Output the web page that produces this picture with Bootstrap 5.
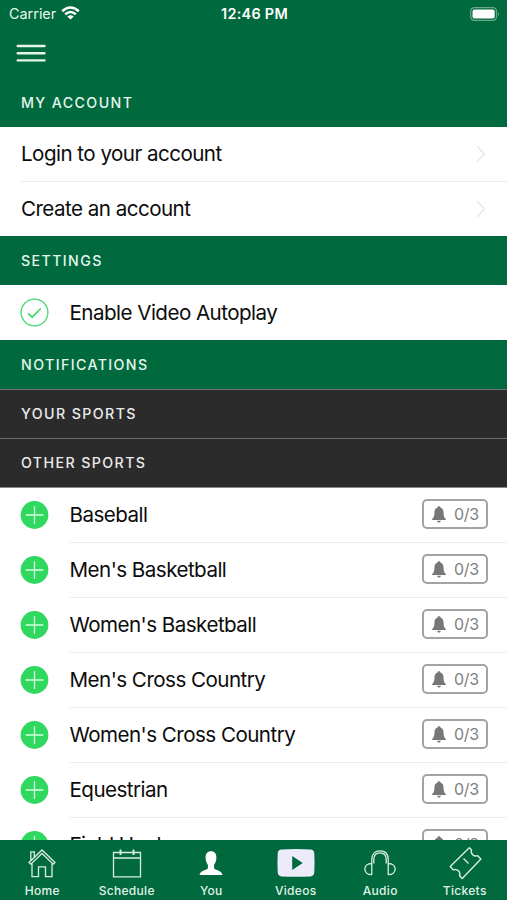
<!DOCTYPE html>
<html lang="en">
<head>
<meta charset="utf-8">
<meta name="viewport" content="width=device-width, initial-scale=1">
<title>My Account</title>
<link href="https://cdn.jsdelivr.net/npm/bootstrap@5.3.0/dist/css/bootstrap.min.css" rel="stylesheet">
<style>
  :root { --brand: #00693e; --ink: #0c0c0c; }
  body { font-family: Inter, "Liberation Sans", sans-serif; color: var(--ink); background: #fff; }
  svg { display: block; flex: none; }
  .bg-brand { background: var(--brand); color: #e6f6ec; }
  .status-bar { height: 28px; padding: 0 7px 0 9px; font-size: 14.4px; line-height: 28px; }
  .status-bar > * { flex: 1 1 0; }
  .status-time { font-weight: 600; letter-spacing: .3px; color: #fff; }
  .wifi { margin: -2px 0 0 5px; }
  .battery { margin-top: -1px; }
  .menu-bar { height: 50px; padding-left: 16px; }
  .section-title { height: 49px; padding: 2px 0 0 21px; font-size: 14.2px; font-weight: 450; line-height: 1; letter-spacing: 1.4px; margin: 0; }
  .section-dark { background: #2b2b2b; color: #ebebeb; border-top: 1px solid #6f6f6f; }
  .section-last { height: 50px; border-bottom: 1px solid #8a8a8a; }
  .line-row { height: 55px; padding-right: 19px; font-size: 20.6px; letter-spacing: -.54px; line-height: 1; border-bottom: 1px solid #ececee; }
  .row-label { padding-top: 2px; }
  .account-row { height: 54.5px; margin-left: 21px; padding-right: 21px; }
  .account-row-last { height: 54px; border-bottom: 0; }
  .icon-cell { width: 69.5px; padding-left: 20px; }
  .alert-count { width: 66px; height: 30px; margin-top: -1px; padding-left: 1px; border: 2px solid #a3a3a3; border-radius: 5px; background: #fff; color: #808080; font-size: 16px; letter-spacing: -.3px; }
  .tab-bar { height: 60px; }
  .tab-item { color: #e0f3e8; font-size: 12px; font-weight: 550; line-height: 14px; letter-spacing: .3px; padding-top: 6px; }
  .tab-item span { margin-top: 2px; }
</style>
<script src="https://cdn.jsdelivr.net/npm/bootstrap@5.3.0/dist/js/bootstrap.bundle.min.js"></script>
</head>
<body class="vh-100 overflow-hidden d-flex flex-column">
<svg width="0" height="0" class="d-none">
  <symbol id="plus" viewBox="0 0 28 28"><circle cx="14" cy="14" r="13.9" fill="#30d860"/><path d="M14 5.6v16.8M5.6 14h16.8" stroke="#d5ffdf" stroke-width="1.3" stroke-linecap="round"/></symbol>
  <symbol id="bell" viewBox="0 0 14 17"><path d="M7 .3c.8 0 1.4.5 1.4 1.2 2.2.7 3 2.4 3.1 4.6.2 4.2.6 5.7 2.4 7v.9H.1v-.9c1.8-1.3 2.2-2.8 2.4-7 .1-2.2.9-3.9 3.1-4.6C5.6.8 6.2.3 7 .3zM5.1 14.7h3.8c-.2 1.2-.9 1.8-1.9 1.8s-1.700-.6-1.900-1.800z" fill="#777"/></symbol>
  <symbol id="chevron" viewBox="0 0 10 18"><path d="M1 1l7.5 8L1 17" fill="none" stroke="#e8e6f5" stroke-width="1.5"/></symbol>
</svg>

<header class="bg-brand flex-shrink-0">
  <div class="status-bar d-flex align-items-center">
    <div class="d-flex align-items-center">
      <span>Carrier</span>
      <svg class="wifi" width="19" height="14" viewBox="0 0 19 14" fill="none" stroke="#fff" stroke-width="2.5"><path d="M1.2 5.2Q9.5-2.2 17.8 5.2M4.2 8.300q5.300-4.500 10.600 0"/><path d="M9.500 13.600L6.300 10.500q3.200-2.600 6.400 0z" fill="#fff" stroke="none"/></svg>
    </div>
    <div class="status-time text-center text-nowrap">12:46 PM</div>
    <div class="d-flex justify-content-end">
      <svg class="battery" width="30" height="14" viewBox="0 0 30 14"><rect x=".7" y=".7" width="25.8" height="12.6" rx="3.7" fill="none" stroke="#6aaa8b" stroke-width="1.3"/><rect x="2.5" y="2.5" width="22.2" height="9" rx="2" fill="#fff"/><path d="M28 4.700q2 2.300 0 4.600z" fill="#6aaa8b"/></svg>
    </div>
  </div>
  <div class="menu-bar d-flex align-items-center">
    <svg width="30" height="19" viewBox="0 0 30 19" stroke="#e6f6ec" stroke-width="2.400" stroke-linecap="round"><path d="M1.700 2h26.800M1.700 9.200h26.800M1.700 16.400h26.800"/></svg>
  </div>
</header>

<main class="flex-grow-1 overflow-hidden">
  <h2 class="section-title bg-brand d-flex align-items-center">MY ACCOUNT</h2>
  <div class="line-row account-row d-flex align-items-center justify-content-between"><span class="row-label">Login to your account</span><svg width="10" height="18"><use href="#chevron"/></svg></div>
  <div class="line-row account-row account-row-last d-flex align-items-center justify-content-between"><span class="row-label">Create an account</span><svg width="10" height="18"><use href="#chevron"/></svg></div>

  <h2 class="section-title bg-brand d-flex align-items-center">SETTINGS</h2>
  <div class="line-row border-0 d-flex align-items-center">
    <span class="icon-cell"><svg width="29" height="29" viewBox="0 0 29 29" fill="none" stroke="#45d96e"><circle cx="14.5" cy="14.5" r="13.4" stroke-width="1.3"/><path d="M8 15.300l4.200 3.900 8.600-8.700" stroke-width="1.700"/></svg></span>
    <span class="row-label">Enable Video Autoplay</span>
  </div>

  <h2 class="section-title bg-brand d-flex align-items-center">NOTIFICATIONS</h2>
  <h2 class="section-title section-dark d-flex align-items-center">YOUR SPORTS</h2>
  <h2 class="section-title section-dark section-last d-flex align-items-center">OTHER SPORTS</h2>

  <div id="sports"></div>
</main>

<nav class="tab-bar bg-brand d-flex flex-shrink-0">
  <div class="tab-item col-2 d-flex flex-column align-items-center">
    <svg width="32" height="36" viewBox="0 0 32 36" fill="none" stroke="#d8eee1" stroke-width="1.3"><path d="M3 16.500L16 4l13 12.500-1.800 1.700L16 7.500 4.800 18.200zM4.800 14.700V5.900H8.300v5.200M6 17.500v13.200h6.500v-9.800h7v9.800H26V17.500"/></svg>
    <span>Home</span>
  </div>
  <div class="tab-item col-2 d-flex flex-column align-items-center">
    <svg width="32" height="36" viewBox="0 0 32 36" fill="none" stroke="#d8eee1" stroke-width="1.3"><path d="M2.500 6.500h27v24.300h-27zM2.500 12h27"/><path d="M9.500 3.500v5.500M22.500 3.500v5.500" stroke-width="1.900"/></svg>
    <span>Schedule</span>
  </div>
  <div class="tab-item col-2 d-flex flex-column align-items-center">
    <svg width="32" height="36" viewBox="0 0 32 36"><path d="M16 5.300c3.600 0 5.500 2.500 5.400 6.500-.1 3.300-1.200 5.500-2.300 7.200v3.300c1 2.300 7.300 1.700 8.400 6.700h-23c1.100-5 7.400-4.400 8.400-6.700V19c-1.100-1.700-2.200-3.900-2.300-7.200-.1-4 1.800-6.500 5.400-6.500z" fill="#fff"/></svg>
    <span>You</span>
  </div>
  <div class="tab-item col-2 d-flex flex-column align-items-center">
    <svg width="38" height="36" viewBox="0 0 38 36"><path fill-rule="evenodd" d="M4.500 3.400Q19 2.600 33.500 3.400q3.500.2 3.800 3.800.5 9.700 0 19.400-.3 3.600-3.800 3.800-14.500.8-29 0Q1 30.200.7 26.600q-.5-9.700 0-19.400Q1 3.600 4.500 3.400zM15.200 10v14l10.500-7z" fill="#ecebfa"/></svg>
    <span>Videos</span>
  </div>
  <div class="tab-item col-2 d-flex flex-column align-items-center">
    <svg width="34" height="36" viewBox="0 0 34 36" fill="none" stroke="#d8eee1" stroke-width="1.3"><path d="M8.800 28.700V13.500C8.800 8 12 4.800 17 4.800s8.200 3.200 8.200 8.700v15.200M10.800 17.500v-4c0-4.300 2.400-6.700 6.200-6.700s6.200 2.400 6.200 6.700v4M8.800 17.500c-9.300 0-9.300 11.200 0 11.200M25.200 17.500c9.300 0 9.300 11.200 0 11.200"/></svg>
    <span>Audio</span>
  </div>
  <div class="tab-item col-2 d-flex flex-column align-items-center">
    <svg width="34" height="36" viewBox="0 0 34 36" fill="none" stroke="#d8eee1" stroke-width="1.4" stroke-linejoin="round"><path d="M21.300 1.800l2.200 2c-1.300 3.800 2.300 7.200 6.200 5.900l3.200 3.400-18.700 19.400-2.600-2.500c1.300-4.100-2.300-7.600-6.400-6.200L2.200 20.600zM15.500 12.500l5 5"/></svg>
    <span>Tickets</span>
  </div>
</nav>

<script>
  const sports = ["Baseball", "Men's Basketball", "Women's Basketball", "Men's Cross Country", "Women's Cross Country", "Equestrian", "Field Hockey"];
  document.getElementById("sports").innerHTML = sports.map(name => `
    <div class="d-flex">
      <div class="icon-cell d-flex align-items-center"><svg width="29" height="28"><use href="#plus"/></svg></div>
      <div class="line-row flex-grow-1 d-flex align-items-center justify-content-between">
        <span class="row-label">${name}</span>
        <span class="alert-count d-flex align-items-center justify-content-center gap-2"><svg width="14" height="17"><use href="#bell"/></svg>0/3</span>
      </div>
    </div>`).join("");
</script>
</body>
</html>
